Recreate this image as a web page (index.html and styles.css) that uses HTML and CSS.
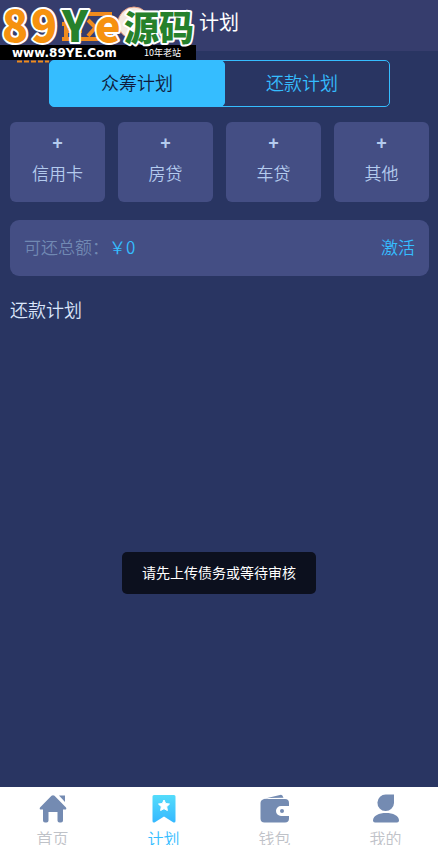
FILE: index.html
```html
<!DOCTYPE html>
<html lang="zh-CN">
<head>
    <meta charset="UTF-8">
    <meta name="viewport" content="width=device-width, initial-scale=1.0">
    <title>计划</title>
    <link rel="stylesheet" href="styles.css">
</head>
<body>
    <header class="header">
        <h1>计划</h1>
    </header>

    <!-- Site logo over the top left corner -->
    <svg class="watermark" width="200" height="66" viewBox="0 0 200 66" role="img" aria-label="89Ye源码">
        <path d="M62 24h20M66 31h16M62 39h46M66 20v20M86 14h24v26M88 20l16 16M104 18l-16 18" fill="none" stroke="#ef8b1d" stroke-width="4"/>
        <path d="M17 61.500h32" stroke="#ef8b1d" stroke-width="2" stroke-dasharray="5 2"/>
        <circle cx="134" cy="23" r="16" fill="#f4e9df" stroke="#e9a084" stroke-width="1"/>
        <path d="M154 58l11 7-1-7z" fill="#e8e2b0"/>
        <rect y="45" width="196" height="15" fill="#000"/>
        <g class="logo-text">
            <text class="orange" x="2" y="42" font-size="43">8</text>
            <text class="orange" x="31" y="42" font-size="43">9</text>
            <text class="green" x="62" y="42" font-size="43">Y</text>
            <text class="orange" x="95" y="42" font-size="43">e</text>
            <text class="green" x="124" y="41" font-size="35">源码</text>
        </g>
        <text class="logo-url" x="12" y="57">www.89YE.Com</text>
        <text class="logo-age" x="144" y="56">10年老站</text>
    </svg>

    <main class="content">
        <div class="tabs">
            <button type="button" class="tab active">众筹计划</button>
            <button type="button" class="tab">还款计划</button>
        </div>

        <div class="cards">
            <button type="button" class="card"><span class="plus">+</span>信用卡</button>
            <button type="button" class="card"><span class="plus">+</span>房贷</button>
            <button type="button" class="card"><span class="plus">+</span>车贷</button>
            <button type="button" class="card"><span class="plus">+</span>其他</button>
        </div>

        <div class="total">
            <span class="total-label">可还总额：</span>
            <span class="total-value">￥0</span>
            <a href="#" class="activate">激活</a>
        </div>

        <h2>还款计划</h2>
    </main>

    <div class="toast" role="status">请先上传债务或等待审核</div>

    <nav class="nav">
        <a href="#" class="nav-item">
            <svg width="30" height="30" viewBox="0 0 30 30" fill="#748bb2">
                <path d="M13.5 1.8Q15 .8 16.500 1.800L28 13.500Q29 15.500 27 15.500H25V26.500Q25 28.500 23 28.500H21.500Q19.500 28.500 19.500 26.500V18H10.500V26.500Q10.500 28.500 8.500 28.500H7Q5 28.500 5 26.500V15.500H3Q1 15.500 2 13.500Z"/>
                <path d="M21 1.500h6v6.500z"/>
            </svg>
            <span>首页</span>
        </a>
        <a href="#" class="nav-item active">
            <svg width="30" height="30" viewBox="0 0 30 30">
                <defs>
                    <linearGradient id="flag" x2="0" y2="1">
                        <stop offset="0" stop-color="#54dcfb"/>
                        <stop offset="1" stop-color="#35b8ff"/>
                    </linearGradient>
                </defs>
                <path d="M5 1h20q1.500 0 1.500 1.500V27q0 2-2 1.500L15 22.500 5.500 28.500q-2 .5-2-1.500V2.500Q3.500 1 5 1z" fill="url(#flag)"/>
                <path d="M15 6l1.700 3.500 3.800.5-2.800 2.700.7 3.800-3.400-1.800-3.400 1.800.7-3.800L9.500 10l3.800-.5z" fill="#fff" stroke="#fff" stroke-linejoin="round"/>
            </svg>
            <span>计划</span>
        </a>
        <a href="#" class="nav-item">
            <svg width="30" height="30" viewBox="0 0 30 30" fill="#748bb2">
                <path d="M3 5L21 .8q1.500 0 2.500 3L9 4z"/>
                <path d="M4 5h21q4 0 4 4v3h-8a5 5 0 000 10h8v2.500q0 4-4 4H4.500q-4 0-4-4V9q0-3 3.500-4z"/>
                <circle cx="22" cy="17" r="2"/>
            </svg>
            <span>钱包</span>
        </a>
        <a href="#" class="nav-item">
            <svg width="30" height="30" viewBox="0 0 30 30" fill="#748bb2">
                <path d="M15 .5h8V9a8.300 8.300 0 11-8-8.500z"/>
                <path d="M2 26.500C2 21.500 8 19 15 19s13 2.500 13 7.500q0 2-2 2H4q-2 0-2-2z"/>
            </svg>
            <span>我的</span>
        </a>
    </nav>
</body>
</html>
```
FILE: styles.css
```css
* {
    box-sizing: border-box;
}
body {
    margin: 0;
    min-height: 100vh;
    overflow: hidden;
    background-color: #293562;
    color: #dbe6fb;
    font-family: "Noto Sans CJK SC", sans-serif;
    font-weight: 350;
}
button {
    border: none;
    padding: 0;
    font: inherit;
    cursor: pointer;
}
a {
    text-decoration: none;
}
.header {
    height: 51px;
    background-color: #363d6d;
    text-align: center;
}
.header h1 {
    margin: 0;
    color: #fff;
    font-size: 20px;
    font-weight: 400;
    line-height: 44px;
}
.watermark {
    position: absolute;
    top: 0;
    left: 0;
}
.logo-text {
    font-weight: 900;
    stroke: #fff;
    stroke-width: 4px;
    stroke-linejoin: round;
    paint-order: stroke;
}
.orange {
    fill: #f6920f;
}
.green {
    fill: #26812b;
}
.logo-url {
    fill: #fff;
    font-family: "DejaVu Sans", sans-serif;
    font-size: 12px;
    font-weight: 700;
}
.logo-age {
    fill: #fff;
    font-size: 9px;
    font-weight: 400;
}
.content {
    padding: 9px 9px 0 10px;
}
.tabs {
    position: relative;
    display: flex;
    height: 47px;
    margin: 0 39px;
}
.tab {
    flex: 1;
    padding-bottom: 4px;
    border: 1px solid #35bdff;
    border-radius: 5px;
    background-color: transparent;
    color: #35bdff;
    font-size: 18px;
}
.tab.active {
    z-index: 1;
    margin-right: -11px;
    background-color: #35bdff;
    color: #101b3c;
}
.cards {
    display: grid;
    grid-template-columns: repeat(4, 1fr);
    gap: 13px;
    margin-top: 15px;
}
.card {
    display: flex;
    flex-direction: column;
    align-items: center;
    height: 80px;
    padding-top: 9px;
    border-radius: 6px;
    background-color: #444e84;
    color: #b4cbee;
    font-size: 17px;
    line-height: 30px;
}
.plus {
    height: 27px;
    font-family: "Liberation Sans", sans-serif;
    font-size: 18px;
    font-weight: 700;
    line-height: 24px;
}
.total {
    display: flex;
    align-items: center;
    height: 56px;
    margin-top: 18px;
    padding: 0 14px 4px;
    border-radius: 9px;
    background-color: #444e84;
    font-size: 17px;
}
.total-label {
    color: #7189b3;
}
.total-value,
.activate {
    color: #35bdff;
}
.activate {
    margin-left: auto;
}
h2 {
    margin: 20px 0 0;
    font-size: 18px;
    font-weight: 350;
    line-height: 27px;
}
.toast {
    position: fixed;
    bottom: 251px;
    left: 50%;
    padding: 0 20px 2px;
    border-radius: 5px;
    background-color: #0c101e;
    color: #fff;
    font-size: 14px;
    font-weight: 400;
    line-height: 40px;
    white-space: nowrap;
    transform: translateX(-50%);
}
.nav {
    position: fixed;
    right: -3px;
    bottom: 0;
    left: -3px;
    display: flex;
    height: 58px;
    padding-top: 7px;
    overflow: hidden;
    background-color: #fff;
}
.nav-item {
    display: flex;
    flex: 1;
    flex-direction: column;
    align-items: center;
    color: #bfc2c8;
    font-size: 16px;
    line-height: 28px;
}
.nav-item svg {
    flex-shrink: 0;
}
.nav-item.active {
    color: #35bdff;
}
```
